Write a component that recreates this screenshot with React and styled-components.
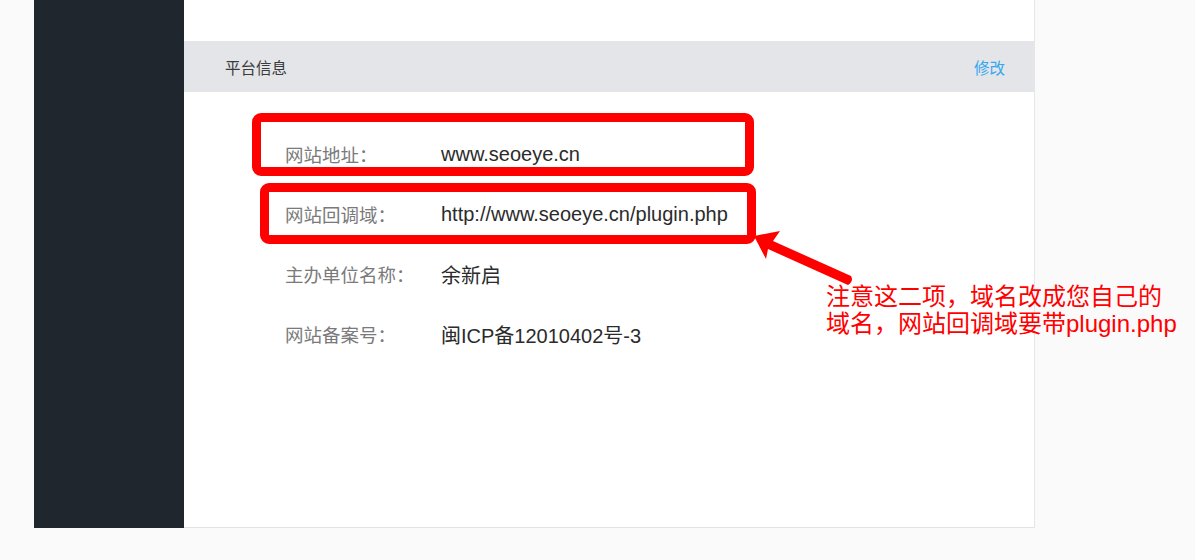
import React from 'react'
import styled, { createGlobalStyle } from 'styled-components'

const GlobalStyle = createGlobalStyle`
  html, body {
    margin: 0;
    padding: 0;
    background: #fafafa;
    font-family: "Liberation Sans", "Noto Sans CJK SC", sans-serif;
  }
`

const Frame = styled.div`
  position: relative;
  display: flex;
  margin-left: 34px;
  width: 1001px;
  height: 528px;
`

const Sidebar = styled.div`
  width: 150px;
  flex-shrink: 0;
  background: #1f262e;
`

const Main = styled.div`
  position: relative;
  flex: 1;
  background: #fff;
  border-right: 1px solid #e6e6e6;
  border-bottom: 1px solid #e3e3e3;
  padding-top: 41px;
  box-sizing: border-box;
`

const Header = styled.div`
  display: flex;
  align-items: center;
  justify-content: space-between;
  height: 51px;
  padding: 0 29px 0 41px;
  background: #e4e5e9;
  font-size: 15.5px;
  color: #3a3a3a;
  font-family: "Noto Sans CJK SC", sans-serif;
`

const EditLink = styled.a`
  color: #35a8f0;
  cursor: pointer;
`

const List = styled.div`
  padding: 32px 0 0 101px;
`

const Row = styled.div`
  display: flex;
  align-items: center;
  height: 60px;
  font-size: 18.5px;
`

const Label = styled.span`
  width: 156px;
  color: #7a7a7a;
  font-family: "Noto Sans CJK SC", sans-serif;
`

const Value = styled.span`
  color: #2b2b2b;
  font-size: 20px;
  font-family: "Liberation Sans", "Noto Sans CJK SC", sans-serif;
`

const RedBox = styled.div`
  position: absolute;
  left: ${p => p.x}px;
  top: ${p => p.y}px;
  width: ${p => p.w}px;
  height: ${p => p.h}px;
  border: 9px solid #ff0000;
  border-radius: 9px;
  box-sizing: border-box;
`

const Arrow = styled.svg`
  position: absolute;
  left: 0;
  top: 0;
  overflow: visible;
`

const Note = styled.div`
  position: absolute;
  left: 792px;
  top: 283px;
  font-family: "Liberation Sans", "Noto Sans CJK SC", sans-serif;
  font-size: 24px;
  line-height: 27px;
  color: #ff0000;
  white-space: nowrap;
`

const rows = [
  ['网站地址：', 'www.seoeye.cn'],
  ['网站回调域：', 'http://www.seoeye.cn/plugin.php'],
  ['主办单位名称：', '余新启'],
  ['网站备案号：', '闽ICP备12010402号-3'],
]

export default function App() {
  return (
    <>
      <GlobalStyle />
      <Frame>
        <Sidebar />
        <Main>
          <Header>
            <span>平台信息</span>
            <EditLink>修改</EditLink>
          </Header>
          <List>
            {rows.map(([label, value]) => (
              <Row key={label}>
                <Label>{label}</Label>
                <Value>{value}</Value>
              </Row>
            ))}
          </List>
          <RedBox x={68} y={113} w={502} h={63} />
          <RedBox x={76} y={183} w={496} h={61} />
        </Main>
        <Arrow width="1" height="1">
          <path
            d="M720 236 L746 231 L739 241 L817 276 Q820 281 814 285 L734 249 L732 259 Z"
            fill="#ff0000"
          />
        </Arrow>
        <Note>
          注意这二项，域名改成您自己的
          <br />
          域名，网站回调域要带plugin.php
        </Note>
      </Frame>
    </>
  )
}
